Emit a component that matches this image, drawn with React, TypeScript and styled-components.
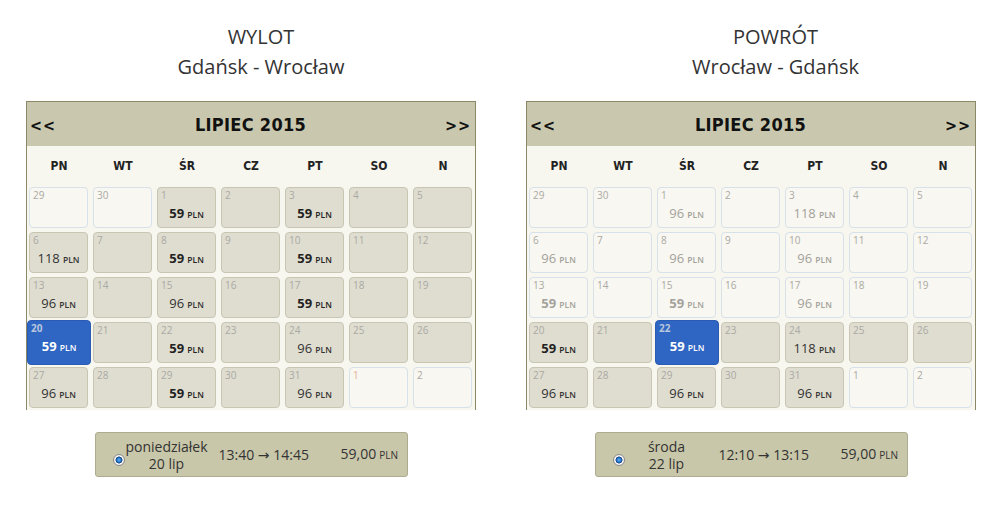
import React from "react";
import styled, { createGlobalStyle, css } from "styled-components";

const Global = createGlobalStyle`
  html, body { margin: 0; padding: 0; background: #ffffff; }
  body { font-family: "Open Sans", "DejaVu Sans", sans-serif; color: #333; }
`;

type Variant = "gray" | "light" | "selected";
type PriceKind = "bold" | "regular" | undefined;

interface DayData {
  n: number;
  v: Variant;
  price?: string;
  kind?: PriceKind;
  faded?: boolean;
  accent?: boolean;
}

const Page = styled.div`
  display: flex;
  gap: 50px;
  padding: 22px 0 0 26px;
`;

const Column = styled.section`
  display: flex;
  flex-direction: column;
  width: 450px;
`;

const Title = styled.div<{ $shift: number }>`
  height: 60px;
  margin-bottom: 19px;
  padding-left: ${(p) => p.$shift}px;
  font-family: "Open Sans", sans-serif;
  font-size: 20px;
  line-height: 30px;
  text-align: center;
  color: #333;
`;

const Calendar = styled.div`
  width: 448px;
  border: 1px solid #8a8866;
  border-bottom: none;
  background: #f7f6ef;
`;

const Header = styled.div`
  height: 44px;
  background: #c9c8ae;
  display: flex;
  align-items: center;
  justify-content: space-between;
  padding: 0 4px 0 3px;
  font-family: "DejaVu Sans Condensed", "DejaVu Sans", sans-serif;
  font-weight: bold;
  color: #111;
`;

const Nav = styled.span`
  font-size: 16px;
  letter-spacing: 1px;
  padding-top: 2px;
`;

const Month = styled.span`
  font-size: 18px;
  letter-spacing: 0.3px;
`;

const DayRow = styled.div`
  display: grid;
  grid-template-columns: repeat(7, 64px);
  height: 39px;
  align-items: center;
  font-family: "DejaVu Sans Condensed", "DejaVu Sans", sans-serif;
  font-weight: bold;
  font-size: 12px;
  color: #222;
  text-align: center;
`;

const Grid = styled.div`
  display: grid;
  grid-template-columns: repeat(7, 64px);
  grid-auto-rows: 45px;
`;

const variantStyles = {
  gray: css`
    margin: 2px 3px 2px 2px;
    background: #dfddd0;
    border: 1px solid #c8c5b3;
  `,
  light: css`
    margin: 2px 3px 2px 2px;
    background: #f8f7f1;
    border: 1px solid #d7e1ea;
  `,
  selected: css`
    margin: 0;
    background: #2f66c3;
    border: 1px solid #2a5cb3;
  `,
};

const Cell = styled.div<{ $v: Variant }>`
  box-sizing: border-box;
  border-radius: 4px;
  display: flex;
  flex-direction: column;
  padding: 1px 3px;
  ${(p) => variantStyles[p.$v]}
`;

const DayNum = styled.span<{ $v: Variant; $accent?: boolean }>`
  font-family: "Open Sans", sans-serif;
  font-size: 10px;
  line-height: 13px;
  color: ${(p) => (p.$accent ? "#e4b28e" : p.$v === "selected" ? "#b9c6dc" : "#aaa9a4")};
  font-weight: ${(p) => (p.$v === "selected" ? 700 : 400)};
`;

const Price = styled.span<{ $kind: PriceKind; $faded?: boolean; $v: Variant }>`
  margin-top: 3px;
  text-align: center;
  font-family: "Open Sans", sans-serif;
  font-size: 13px;
  line-height: 16px;
  font-weight: ${(p) => (p.$kind === "bold" ? 700 : 400)};
  color: ${(p) =>
    p.$v === "selected" ? "#ffffff" : p.$faded ? "#a3a29c" : p.$kind === "bold" ? "#222" : "#333"};
`;

const Unit = styled.span`
  font-size: 8.5px;
  font-weight: 600;
  margin-left: 1px;
`;

const Bar = styled.div`
  box-sizing: border-box;
  width: 313px;
  height: 45px;
  margin: 22px auto 0;
  background: #c9c7a9;
  border: 1px solid #aeac90;
  border-radius: 3px;
  display: flex;
  align-items: center;
  font-family: "Open Sans", "DejaVu Sans", sans-serif;
  font-size: 14px;
  color: #333;
`;

const Radio = styled.span`
  box-sizing: border-box;
  width: 12px;
  height: 12px;
  margin: 11px 0 0 17px;
  border-radius: 50%;
  border: 1px solid #8d8d8d;
  background: radial-gradient(
    circle,
    #5fb4f5 0,
    #1f6fc8 2.3px,
    #173a6a 3.2px,
    #ffffff 3.8px,
    #e8e8e8 5px
  );
  flex: none;
`;

const DateCol = styled.div`
  width: 86px;
  margin-left: -1px;
  text-align: center;
  line-height: 17px;
  display: flex;
  flex-direction: column;
`;

const Time = styled.div`
  width: 122px;
  margin-left: 9px;
  line-height: 17px;
`;

const Amount = styled.div`
  line-height: 17px;
`;

const AmountUnit = styled.span`
  font-size: 10px;
  margin-left: 3px;
`;

const DAYS = ["PN", "WT", "ŚR", "CZ", "PT", "SO", "N"];

const g = (n: number, price?: string, kind?: PriceKind): DayData => ({ n, v: "gray", price, kind });
const l = (n: number, price?: string, kind?: PriceKind, accent?: boolean): DayData => ({
  n,
  v: "light",
  price,
  kind,
  faded: true,
  accent,
});
const s = (n: number, price: string): DayData => ({ n, v: "selected", price, kind: "bold" });

const outbound: DayData[] = [
  l(29), l(30), g(1, "59", "bold"), g(2), g(3, "59", "bold"), g(4), g(5),
  g(6, "118", "regular"), g(7), g(8, "59", "bold"), g(9), g(10, "59", "bold"), g(11), g(12),
  g(13, "96", "regular"), g(14), g(15, "96", "regular"), g(16), g(17, "59", "bold"), g(18), g(19),
  s(20, "59"), g(21), g(22, "59", "bold"), g(23), g(24, "96", "regular"), g(25), g(26),
  g(27, "96", "regular"), g(28), g(29, "59", "bold"), g(30), g(31, "96", "regular"), l(1, undefined, undefined, true), l(2),
];

const inbound: DayData[] = [
  l(29), l(30), l(1, "96", "regular"), l(2), l(3, "118", "regular"), l(4), l(5),
  l(6, "96", "regular"), l(7), l(8, "96", "regular"), l(9), l(10, "96", "regular"), l(11), l(12),
  l(13, "59", "bold"), l(14), l(15, "59", "bold"), l(16), l(17, "96", "regular"), l(18), l(19),
  g(20, "59", "bold"), g(21), s(22, "59"), g(23), g(24, "118", "regular"), g(25), g(26),
  g(27, "96", "regular"), g(28), g(29, "96", "regular"), g(30), g(31, "96", "regular"), l(1), l(2),
];

interface PanelProps {
  title: string;
  route: string;
  shift: number;
  days: DayData[];
  dayName: string;
  date: string;
  time: string;
}

function Panel({ title, route, shift, days, dayName, date, time }: PanelProps) {
  return (
    <Column>
      <Title $shift={shift}>
        <div>{title}</div>
        <div>{route}</div>
      </Title>
      <Calendar>
        <Header>
          <Nav>&lt;&lt;</Nav>
          <Month>LIPIEC 2015</Month>
          <Nav>&gt;&gt;</Nav>
        </Header>
        <DayRow>
          {DAYS.map((d) => (
            <span key={d}>{d}</span>
          ))}
        </DayRow>
        <Grid>
          {days.map((d, i) => (
            <Cell key={i} $v={d.v}>
              <DayNum $v={d.v} $accent={d.accent}>
                {d.n}
              </DayNum>
              {d.price && (
                <Price $kind={d.kind} $faded={d.faded} $v={d.v}>
                  {d.price}
                  <Unit> PLN</Unit>
                </Price>
              )}
            </Cell>
          ))}
        </Grid>
      </Calendar>
      <Bar>
        <Radio />
        <DateCol>
          <span>{dayName}</span>
          <span>{date}</span>
        </DateCol>
        <Time>{time}</Time>
        <Amount>
          59,00<AmountUnit>PLN</AmountUnit>
        </Amount>
      </Bar>
    </Column>
  );
}

export default function App() {
  return (
    <>
      <Global />
      <Page>
        <Panel
          title="WYLOT"
          route="Gdańsk - Wrocław"
          shift={20}
          days={outbound}
          dayName="poniedziałek"
          date="20 lip"
          time="13:40 → 14:45"
        />
        <Panel
          title="POWRÓT"
          route="Wrocław - Gdańsk"
          shift={49}
          days={inbound}
          dayName="środa"
          date="22 lip"
          time="12:10 → 13:15"
        />
      </Page>
    </>
  );
}
